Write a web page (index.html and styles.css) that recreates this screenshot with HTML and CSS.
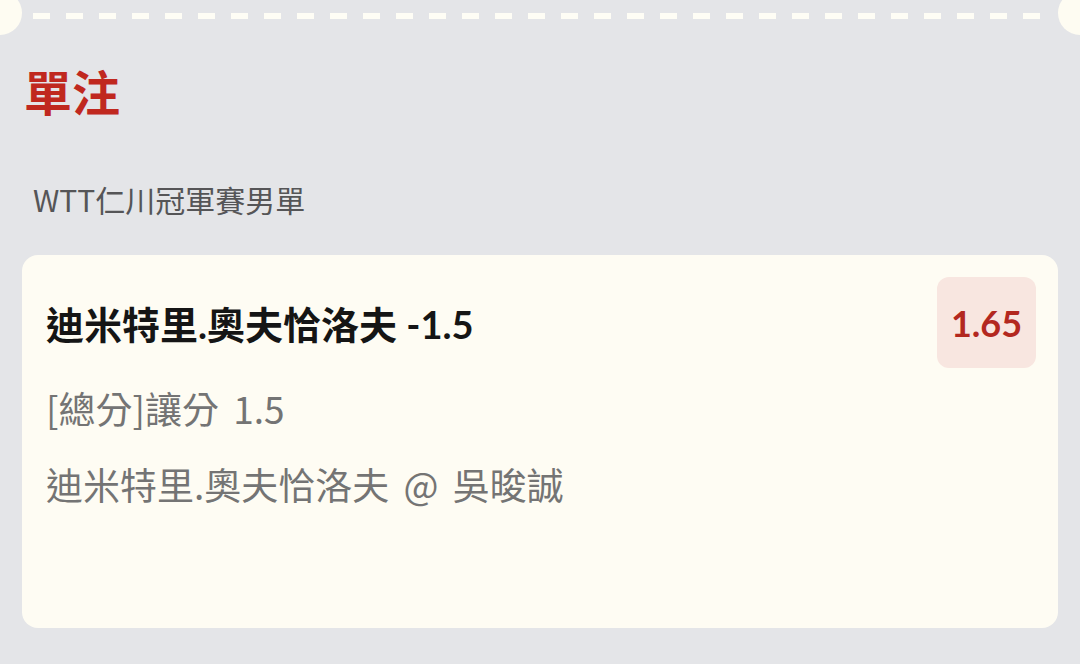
FILE: index.html
```html
<!doctype html>
<html lang="zh-Hant">
  <head>
    <meta charset="UTF-8" />
    <meta name="viewport" content="width=device-width, initial-scale=1.0" />
    <title>單注</title>
    <link rel="stylesheet" href="styles.css">
  </head>
  <body>
    <div class="ticket-edge"></div>

    <h1 class="slip-title">單注</h1>
    <div class="event-name">WTT仁川冠軍賽男單</div>

    <div class="bet-card">
      <div class="bet-head">
        <div class="selection">迪米特里.奧夫恰洛夫 -1.5</div>
        <div class="odds">1.65</div>
      </div>
      <div class="market">[總分]讓分 1.5</div>
      <div class="match">迪米特里.奧夫恰洛夫 @ 吳晙誠</div>
    </div>
  </body>
</html>
```

FILE: styles.css
```css
html,
body {
  margin: 0;
  padding: 0;
}

body {
  width: 1080px;
  height: 664px;
  overflow: hidden;
  background-color: #e4e5e8;
  font-family: 'Lato', 'Noto Sans CJK TC', sans-serif;
}

.ticket-edge {
  position: relative;
  height: 35px;
  background-image: repeating-linear-gradient(
    to right,
    #fefdf5 0,
    #fefdf5 17px,
    transparent 17px,
    transparent 33px
  );
  background-size: 1015px 6px;
  background-position: 33px 13px;
  background-repeat: no-repeat;
}

.ticket-edge::before,
.ticket-edge::after {
  content: '';
  position: absolute;
  top: -9px;
  width: 44px;
  height: 44px;
  border-radius: 50%;
  background-color: #fefcf2;
}

.ticket-edge::before {
  left: -22px;
}

.ticket-edge::after {
  right: -22px;
}

.slip-title {
  margin: 28px 0 0 24px;
  font-size: 48px;
  font-weight: 700;
  line-height: 60px;
  color: #c0281f;
}

.event-name {
  margin: 56px 0 0 33px;
  font-family: 'Noto Sans CJK TC', sans-serif;
  font-size: 30px;
  line-height: 40px;
  color: #555557;
}

.bet-card {
  margin: 36px 22px 0;
  height: 373px;
  box-sizing: border-box;
  padding: 22px 22px 0 24px;
  background-color: #fefcf3;
  border-radius: 16px;
}

.bet-head {
  display: flex;
  align-items: center;
  justify-content: space-between;
}

.selection {
  font-size: 38px;
  font-weight: 700;
  color: #151515;
}

.odds {
  width: 99px;
  height: 91px;
  display: flex;
  align-items: center;
  justify-content: center;
  border-radius: 12px;
  background-color: #f8e6e0;
  color: #b3281f;
  font-size: 36px;
  font-weight: 700;
}

.market,
.match {
  font-family: 'Noto Sans CJK TC', sans-serif;
  font-size: 37px;
  line-height: 76px;
  word-spacing: 6px;
  color: #747474;
}

.market {
  margin-top: 2px;
}
```
